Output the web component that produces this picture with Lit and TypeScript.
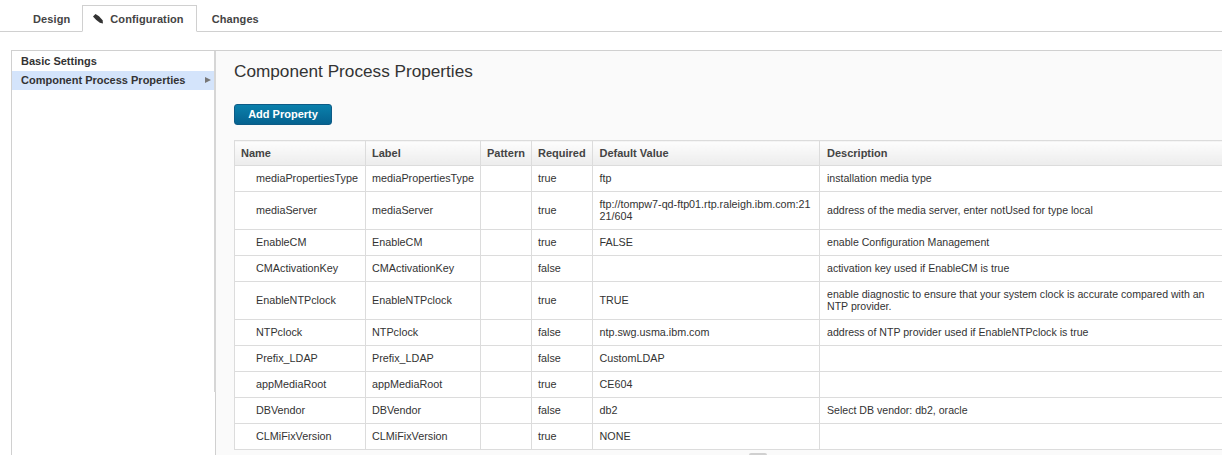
import { LitElement, html, css } from "lit";
import { customElement } from "lit/decorators.js";

const rows: [string, string, string, string, string, string, string][] = [
  ["mediaPropertiesType", "mediaPropertiesType", "", "true", "ftp", "installation media type", "h26"],
  ["mediaServer", "mediaServer", "", "true", "ftp://tompw7-qd-ftp01.rtp.raleigh.ibm.com:2121/604", "address of the media server, enter notUsed for type local", "h38"],
  ["EnableCM", "EnableCM", "", "true", "FALSE", "enable Configuration Management", "h26"],
  ["CMActivationKey", "CMActivationKey", "", "false", "", "activation key used if EnableCM is true", "h26"],
  ["EnableNTPclock", "EnableNTPclock", "", "true", "TRUE", "enable diagnostic to ensure that your system clock is accurate compared with an NTP provider.", "h38"],
  ["NTPclock", "NTPclock", "", "false", "ntp.swg.usma.ibm.com", "address of NTP provider used if EnableNTPclock is true", "h26"],
  ["Prefix_LDAP", "Prefix_LDAP", "", "false", "CustomLDAP", "", "h26"],
  ["appMediaRoot", "appMediaRoot", "", "true", "CE604", "", "h26"],
  ["DBVendor", "DBVendor", "", "false", "db2", "Select DB vendor: db2, oracle", "h26"],
  ["CLMiFixVersion", "CLMiFixVersion", "", "true", "NONE", "", "h26"],
];

@customElement("app-root")
export class AppRoot extends LitElement {
  static styles = css`
    :host {
      display: block;
      width: 1222px;
      height: 455px;
      overflow: hidden;
      background: #fff;
      font-family: "Liberation Sans", Arial, sans-serif;
      font-size: 11px;
      color: #333;
    }
    .tabs {
      display: flex;
      height: 32px;
      box-sizing: border-box;
      padding: 5px 0 0 17px;
      border-bottom: 1px solid #d0d0d0;
    }
    .tab {
      display: flex;
      align-items: center;
      box-sizing: border-box;
      height: 27px;
      padding: 0 12px 0 16px;
      border: 1px solid transparent;
      border-width: 1px 0;
      font-weight: bold;
      font-size: 11px;
      letter-spacing: 0.1px;
      color: #444;
    }
    .tab.active {
      gap: 7px;
      padding: 0 12px 0 10px;
      border: 1px solid #d0d0d0;
      border-bottom: 1px solid #fff;
      background: #fff;
    }
    .tab.last { padding-left: 15px; }
    .main {
      display: flex;
      margin: 18px 0 0 11px;
      height: 405px;
    }
    .side {
      width: 203px;
      box-sizing: border-box;
      border-left: 1px solid #d0d0d0;
      border-top: 1px solid #d0d0d0;
      padding-top: 1px;
      flex: none;
    }
    .side-item {
      height: 19px;
      line-height: 19px;
      padding-left: 9px;
      font-weight: bold;
      font-size: 11px;
      color: #333;
      position: relative;
    }
    .side-item.sel { background: #d4e4fb; }
    .arrow {
      position: absolute;
      right: 3px;
      top: 6px;
      width: 0;
      height: 0;
      border-left: 6px solid #777;
      border-top: 3.5px solid transparent;
      border-bottom: 3.5px solid transparent;
    }
    .splitter {
      width: 2px;
      flex: none;
      background: linear-gradient(to right, transparent 1px, #d0d0d0 1px);
      border-top: 1px solid #d0d0d0;
    }
    .grip {
      height: 341px;
      background: #d6d6d6;
    }
    .content {
      flex: 1;
      min-width: 0;
      position: relative;
      background: #fafafa;
      border-top: 1px solid #d0d0d0;
      padding: 10px 0 0 18px;
    }
    h1 {
      margin: 0;
      font-weight: normal;
      font-size: 17.2px;
      line-height: 20px;
      color: #333;
    }
    .btn {
      display: block;
      margin-top: 23px;
      box-sizing: border-box;
      width: 98px;
      height: 21px;
      border: 1px solid #0d5b86;
      border-radius: 3px;
      background: linear-gradient(#0a80ac, #05628f);
      color: #fff;
      font: bold 11px "Liberation Sans", Arial, sans-serif;
      padding: 0 0 1px;
    }
    table {
      margin-top: 15px;
      border-collapse: collapse;
      table-layout: fixed;
      width: 1000px;
      background: #fff;
    }
    th, td {
      border: 1px solid #dcdcdc;
      text-align: left;
      line-height: 12px;
    }
    td {
      padding: 0 6px 2px;
      font-size: 10.8px;
    }
    th {
      padding: 0 6px;
      height: 25px;
      box-sizing: border-box;
      font-size: 11px;
      font-weight: bold;
      color: #444;
      white-space: nowrap;
      background: linear-gradient(#fdfdfd, #ececec);
    }
    th:nth-child(5) { padding-left: 6.5px; }
    th:nth-child(6) { padding-left: 7px; }
    td.name { padding-left: 21px; white-space: nowrap; }
    td.label { white-space: nowrap; }
    td.def { padding-left: 6.5px; word-break: break-all; font-size: 10.75px; }
    td.desc { padding-left: 7px; padding-right: 14px; font-size: 10.58px; }
    tr.h26 td { height: 23px; }
    tr.h38 td { height: 35px; }
    .handle {
      position: absolute;
      left: 533px;
      top: 402px;
      width: 18px;
      height: 2px;
      border-radius: 2px 2px 0 0;
      background: #d0d0d0;
    }
  `;

  render() {
    return html`
      <div class="tabs">
        <div class="tab">Design</div>
        <div class="tab active">
          <svg width="10" height="10" viewBox="0 0 10 10">
            <path d="M0 2.5 L2.5 0 L6 2.2 L9.6 6.2 L10 9.4 L6.8 8.8 L3 5.8 Z" fill="#333" />
          </svg>
          Configuration
        </div>
        <div class="tab last">Changes</div>
      </div>
      <div class="main">
        <div class="side">
          <div class="side-item">Basic Settings</div>
          <div class="side-item sel">Component Process Properties<span class="arrow"></span></div>
        </div>
        <div class="splitter"><div class="grip"></div></div>
        <div class="content">
          <h1>Component Process Properties</h1>
          <button class="btn">Add Property</button>
          <table>
            <colgroup>
              <col style="width:131px" /><col style="width:115px" /><col style="width:51px" />
              <col style="width:61px" /><col style="width:227px" /><col style="width:415px" />
            </colgroup>
            <thead>
              <tr>
                <th>Name</th><th>Label</th><th>Pattern</th><th>Required</th><th>Default Value</th><th>Description</th>
              </tr>
            </thead>
            <tbody>
              ${rows.map(
                (r) => html`<tr class=${r[6]}>
                  <td class="name">${r[0]}</td><td class="label">${r[1]}</td><td>${r[2]}</td><td>${r[3]}</td><td class="def">${r[4]}</td><td class="desc">${r[5]}</td>
                </tr>`
              )}
            </tbody>
          </table>
          <div class="handle"></div>
        </div>
      </div>
    `;
  }
}
